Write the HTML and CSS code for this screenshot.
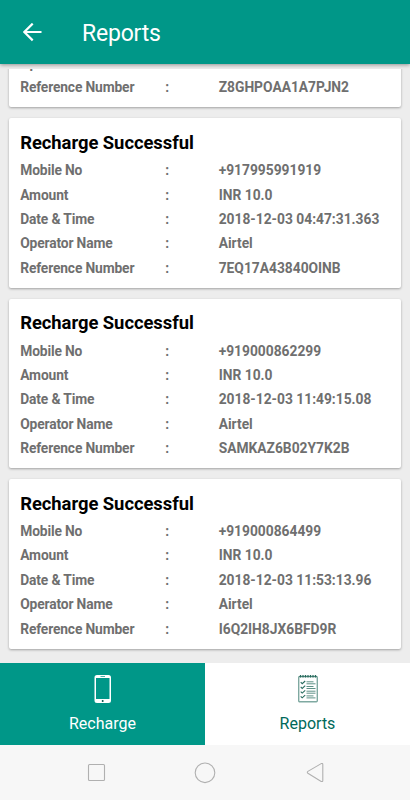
FILE: index.html
```html
<!DOCTYPE html>
<html lang="en">
<head>
<meta charset="utf-8">
<title>Reports</title>
<link rel="stylesheet" href="styles.css">
</head>
<body>
<div class="app">
  <header class="bar">
    <svg class="back" width="20" height="20" viewBox="0 0 20 20"><path d="M18.500 9H1.500M9.700.6 1.300 9l8.400 8.400"/></svg>
    <h1>Reports</h1>
  </header>
  <main class="list">
    <section class="card">
      <dl>
        <dt>Operator Name</dt><i>:</i><dd>Airtel</dd>
        <dt>Reference Number</dt><i>:</i><dd>Z8GHPOAA1A7PJN2</dd>
      </dl>
    </section>
    <section class="card">
      <h2>Recharge Successful</h2>
      <dl>
        <dt>Mobile No</dt><i>:</i><dd>+917995991919</dd>
        <dt>Amount</dt><i>:</i><dd>INR 10.0</dd>
        <dt>Date &amp; Time</dt><i>:</i><dd>2018-12-03 04:47:31.363</dd>
        <dt>Operator Name</dt><i>:</i><dd>Airtel</dd>
        <dt>Reference Number</dt><i>:</i><dd>7EQ17A43840OINB</dd>
      </dl>
    </section>
    <section class="card">
      <h2>Recharge Successful</h2>
      <dl>
        <dt>Mobile No</dt><i>:</i><dd>+919000862299</dd>
        <dt>Amount</dt><i>:</i><dd>INR 10.0</dd>
        <dt>Date &amp; Time</dt><i>:</i><dd>2018-12-03 11:49:15.08</dd>
        <dt>Operator Name</dt><i>:</i><dd>Airtel</dd>
        <dt>Reference Number</dt><i>:</i><dd>SAMKAZ6B02Y7K2B</dd>
      </dl>
    </section>
    <section class="card">
      <h2>Recharge Successful</h2>
      <dl>
        <dt>Mobile No</dt><i>:</i><dd>+919000864499</dd>
        <dt>Amount</dt><i>:</i><dd>INR 10.0</dd>
        <dt>Date &amp; Time</dt><i>:</i><dd>2018-12-03 11:53:13.96</dd>
        <dt>Operator Name</dt><i>:</i><dd>Airtel</dd>
        <dt>Reference Number</dt><i>:</i><dd>I6Q2IH8JX6BFD9R</dd>
      </dl>
    </section>
  </main>
  <nav class="tabs">
    <div class="tab active">
      <svg width="18" height="30" viewBox="0 0 18 30"><path fill="#fff" fill-rule="evenodd" d="M3 1h11.500a2.500 2.500 0 0 1 2.500 2.500v23a2.500 2.500 0 0 1-2.500 2.500H3A2.500 2.500 0 0 1 .5 26.500v-23A2.500 2.500 0 0 1 3 1zM2 4v21h13.500V4z"/><path stroke="#009788" stroke-width=".7" d="M6.500 2.500h4.500"/><circle cx="8.700" cy="26.900" r="1" fill="#00584d"/></svg>
      <span>Recharge</span>
    </div>
    <div class="tab">
      <svg width="22" height="30" viewBox="0 0 22 30" fill="none"><rect x="1.700" y="2.500" width="18.600" height="25.300" rx="1" stroke="#7fa9a1" stroke-width="1.400"/><path d="M2 2.500h18" stroke="#4f8579" stroke-width="1"/><path d="M3.500 1v2.500M6 1v2.500M8.500 1v2.500M11 1v2.500M13.500 1v2.500M16 1v2.500M18.500 1v2.500" stroke="#266b5d" stroke-width="1.100"/><path d="m3.700 8.200 1.500 1.500 3-2.700M3.700 12.900l1.500 1.500 3-2.700M3.700 17.600l1.500 1.500 3-2.700M3.700 22.300l1.500 1.500 3-2.700" stroke="#266b5d" stroke-width="1.100"/><path d="M9.500 7.800h7M9.500 9.800h9M9.500 12.500h7M9.500 14.500h9M9.500 17.200h9M9.500 19.200h9M9.500 21.900h7M9.500 23.900h9" stroke="#5f9287" stroke-width="1"/></svg>
      <span>Reports</span>
    </div>
  </nav>
  <footer class="system">
    <svg width="22" height="22" viewBox="0 0 22 22"><rect x="3.500" y="2.500" width="16" height="16" rx="1"/></svg>
    <svg width="22" height="22" viewBox="0 0 22 22"><circle cx="11" cy="10.800" r="9.800"/></svg>
    <svg width="22" height="22" viewBox="0 0 22 22"><path d="M18.200 1.600 4.900 9.400q-1.200.9 0 1.800L18.200 19.400q1.600.6 1.600-1V2.600q0-1.600-1.600-1z"/></svg>
  </footer>
</div>
</body>
</html>
```

FILE: styles.css
```css
* { box-sizing: border-box; margin: 0; padding: 0; }
body { font-family: Roboto, sans-serif; background: #ededed; }
.app { display: flex; flex-direction: column; height: 800px; width: 410px; overflow: hidden; }
.bar {
  display: flex; align-items: center; flex: none; height: 64px;
  padding: 2px 0 0 22.500px; margin-bottom: 5px; color: #fff; background: #009788;
  box-shadow: 0 1px 4px rgba(0, 0, 0, .4);
}
.back { fill: none; stroke: #fff; stroke-width: 2.2; }
.bar h1 { margin-left: 39.500px; font-size: 23px; font-weight: 400; letter-spacing: -.2px; }
.list {
  display: flex; flex: 1; flex-direction: column; justify-content: flex-end; gap: 11px;
  min-height: 0; padding: 0 8.7px 14.4px; overflow: hidden;
}
.card {
  flex: none; padding: 12.4px 11.5px 7.600px; background: #fff; border-radius: 2px;
  box-shadow: 0 1px 2.500px rgba(0, 0, 0, .32);
}
.card h2 { height: 27.500px; font-size: 18.400px; line-height: 23.600px; font-weight: 700; letter-spacing: -.04px; color: #000; }
.card dl {
  display: grid; grid-template-columns: 145px 53.500px 1fr; grid-auto-rows: 24.400px;
  font-size: 13.800px; line-height: 24.400px; font-weight: 700; color: #6f6f6f; white-space: nowrap;
}
.card dt { letter-spacing: -.14px; }
.card i { font-style: normal; }
.tabs { display: flex; flex: none; height: 82px; background: #fff; }
.tab {
  display: flex; flex: 1; flex-direction: column; align-items: center;
  padding-top: 11px; font-size: 16px; line-height: 20px; color: #00695a;
}
.tab span { margin-top: 10px; }
.tab.active { color: #fff; background: #009788; }
.system {
  display: flex; flex: none; justify-content: center; gap: 87px;
  height: 55px; padding-top: 17px; background: #f7f7f7;
}
.system svg { fill: none; stroke: #b0b0b0; stroke-width: 1.100; }
```
